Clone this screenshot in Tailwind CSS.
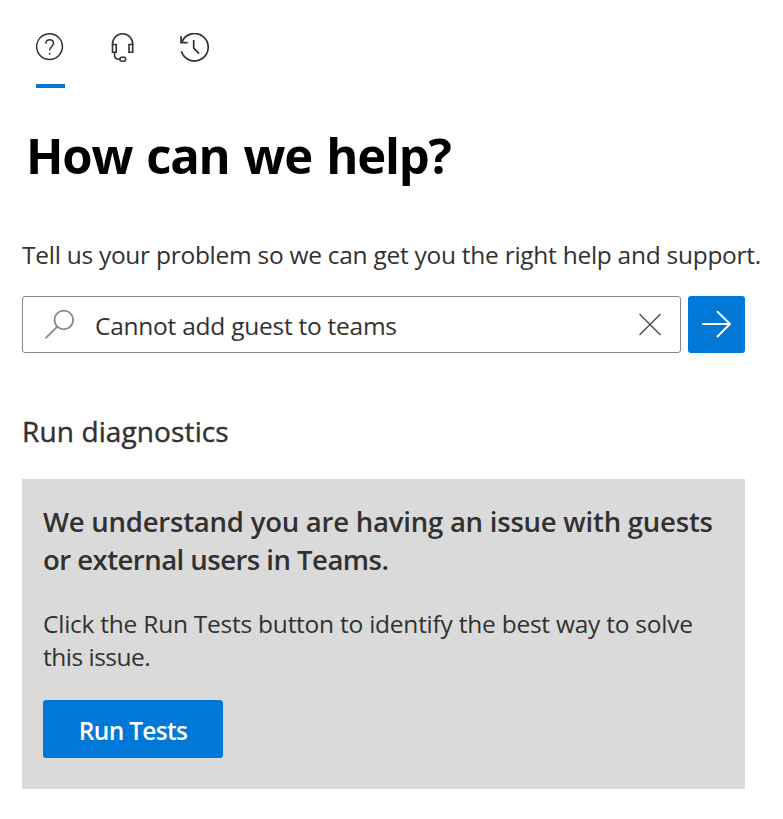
<!DOCTYPE html>
<html lang="en">
<head>
<meta charset="utf-8">
<title>Help</title>
<script src="https://cdn.jsdelivr.net/npm/@tailwindcss/browser@4"></script>
</head>
<body class="bg-white font-['Open_Sans','Noto_Sans',sans-serif] text-[#323130] overflow-hidden">
<main class="w-[783px] h-[819px] pl-[22px] pr-[38px] flex flex-col whitespace-nowrap">
  <nav class="h-[88px] pl-[14px] pt-[33px] flex gap-[43px]">
    <button class="w-[29px] flex flex-col justify-between border-b-4 border-[#0078d4]" aria-label="Help">
      <svg class="w-7 h-7" viewBox="0 0 28 28" fill="none" stroke="#323130" stroke-width="1.5"><circle cx="13.5" cy="13.6" r="12.9"/><path d="M9.9 10.7c0-2.3 1.5-4 3.8-4s3.8 1.5 3.8 3.6c0 3-3.9 3.5-3.9 7.2"/><path d="M13.6 19.7v1.8"/></svg>
    </button>
    <button class="w-[29px] flex flex-col" aria-label="Support">
      <svg class="w-[29px] h-[30px]" viewBox="0 0 29 30" fill="none" stroke="#323130" stroke-width="1.6"><path d="M4.5 11.5V11a10.1 10.2 0 0 1 20.2 0v.5"/><path d="M4.5 11.5h3.700v7.700h-3.700zM21 11.5h3.700v7.700H21z"/><path d="M6.500 19.200v2.300c0 2.600 1.700 4.700 4.600 4.700h.8"/><rect x="12" y="24.300" width="5.700" height="3.900" rx="1.600"/></svg>
    </button>
    <button class="w-[30px] flex flex-col" aria-label="History">
      <svg class="w-[30px] h-[30px]" viewBox="0 0 30 30" fill="none" stroke="#323130" stroke-width="1.7"><path d="M1.6 9.7A13.7 13.7 0 1 1 1.4 18.2"/><path d="M1 3.2v6.5h6.700M13.7 7v8.2l5.400 5.500"/></svg>
    </button>
  </nav>
  <h1 class="mt-[37px] pl-1 h-[60px] leading-[60px] text-[49px] tracking-[-1.200px] [word-spacing:2.500px] font-bold text-black">How can we help?</h1>
  <p class="mt-[53px] h-[33px] leading-[33px] text-[24.500px] tracking-[-0.270px]">Tell us your problem so we can get you the right help and support.</p>
  <form class="mt-[25px] flex gap-[7px]">
    <div class="w-[659px] h-[57px] border border-[#8a8886] rounded-[3px] flex items-center pl-[21px] pr-[18px]">
      <svg class="w-[32px] h-[32px]" viewBox="0 0 32 32" fill="none" stroke="#8a8886" stroke-width="1.8"><circle cx="19.8" cy="11" r="9.3"/><path d="M13.2 17.600L1.400 29.300"/></svg>
      <span class="ml-[19px] pt-[1px] leading-[33px] text-[24.500px] tracking-[-0.250px]">Cannot add guest to teams</span>
      <svg class="ml-auto w-[24px] h-[24px]" viewBox="0 0 24 24" fill="none" stroke="#55534f" stroke-width="1.500"><path d="M1.500 1l21 21M22.500 1l-21 21"/></svg>
    </div>
    <button type="button" class="w-[57px] h-[57px] rounded-[3px] bg-[#0078d7] flex items-center justify-center" aria-label="Search">
      <svg class="w-[31px] h-[28px]" viewBox="0 0 31 28" fill="none" stroke="#fff" stroke-width="2"><path d="M1 13h28M16 .2l13 12.800L16 26"/></svg>
    </button>
  </form>
  <h2 class="mt-[59px] h-[38px] leading-[38px] text-[28px] tracking-[0.120px] [-webkit-text-stroke:0.400px_#323130]">Run diagnostics</h2>
  <section class="mt-[29px] w-[723px] h-[310px] bg-[#dadada] pl-[21px] pt-[24px]">
    <h3 class="leading-[38px] text-[27.500px] font-semibold"><span class="tracking-[-0.220px]">We understand you are having an issue with guests</span><br><span class="tracking-[-0.520px]">or external users in Teams.</span></h3>
    <p class="mt-[28px] leading-[33px] text-[24.500px]"><span class="tracking-[-0.240px]">Click the Run Tests button to identify the best way to solve</span><br><span class="tracking-[-0.500px]">this issue.</span></p>
    <button class="mt-[27px] w-[180px] h-[58px] rounded-[3px] bg-[#0078d7] text-white text-[24.500px] tracking-[-0.700px] font-semibold leading-[56px] pt-[3px]">Run Tests</button>
  </section>
</main>
</body>
</html>
